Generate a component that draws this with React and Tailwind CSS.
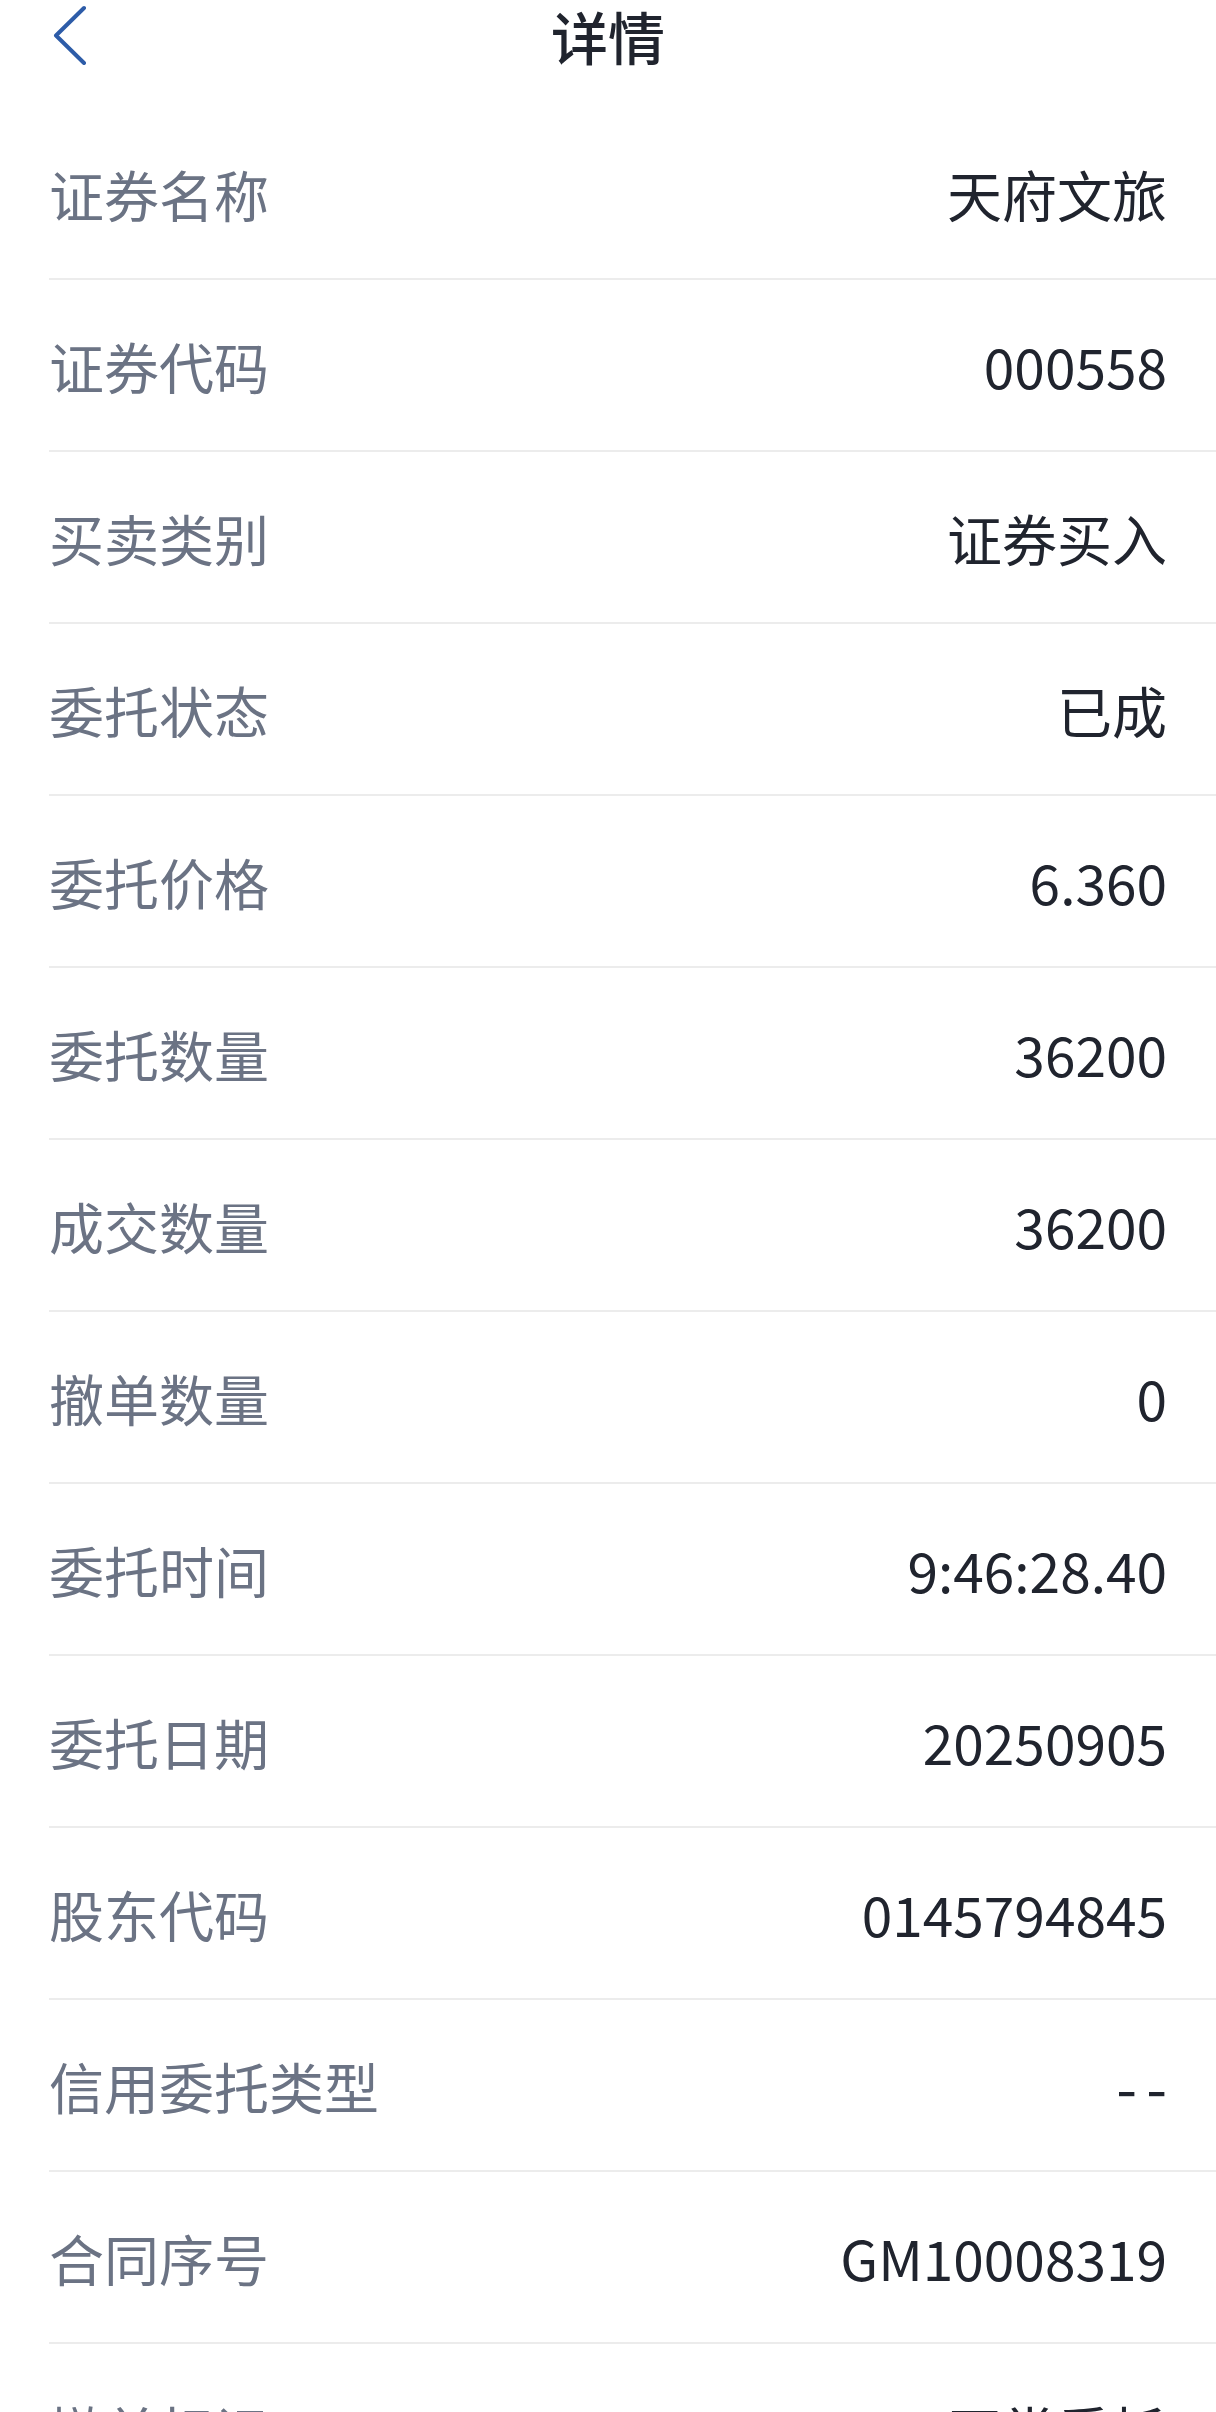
import React from "react";

const rows = [
  ["证券名称", "天府文旅"],
  ["证券代码", "000558"],
  ["买卖类别", "证券买入"],
  ["委托状态", "已成"],
  ["委托价格", "6.360"],
  ["委托数量", "36200"],
  ["成交数量", "36200"],
  ["撤单数量", "0"],
  ["委托时间", "9:46:28.40"],
  ["委托日期", "20250905"],
  ["股东代码", "0145794845"],
  ["信用委托类型", "--", true],
  ["合同序号", "GM10008319"],
  ["撤单标记", "正常委托"],
];

export default function App() {
  return (
    <div
      className="w-[1216px] h-[2412px] overflow-hidden bg-white"
      style={{ fontFamily: '"Noto Sans CJK SC", "Noto Sans", sans-serif' }}
    >
      <header className="h-[108px]">
        <div className="grid h-[70px] grid-cols-[1fr_auto_1fr] items-center pl-[53px] pr-[53px]">
          <div className="flex items-center">
            <svg width="34" height="60" viewBox="0 0 34 60" fill="none">
              <polyline
                points="31,3 3,30.5 31,58"
                stroke="#2d5ca8"
                strokeWidth="4"
                strokeLinecap="round"
                strokeLinejoin="round"
              />
            </svg>
          </div>
          <h1 className="text-[57px] leading-[70px] font-medium text-[#20242e]">详情</h1>
          <div />
        </div>
      </header>
      <div className="ml-[49px]">
        {rows.map(([label, value, dashes]) => (
          <div
            key={label}
            className="flex h-[172px] items-center justify-between border-b-2 border-[#ececec] pr-[49px]"
          >
            <span className="text-[55px] leading-none text-[#6b7384]">{label}</span>
            {dashes ? (
              <span className="mr-[-9px] text-[60px] leading-none tracking-[9px] text-[#20242e]">{value}</span>
            ) : (
              <span className="text-[55px] leading-none text-[#20242e]">{value}</span>
            )}
          </div>
        ))}
      </div>
    </div>
  );
}
